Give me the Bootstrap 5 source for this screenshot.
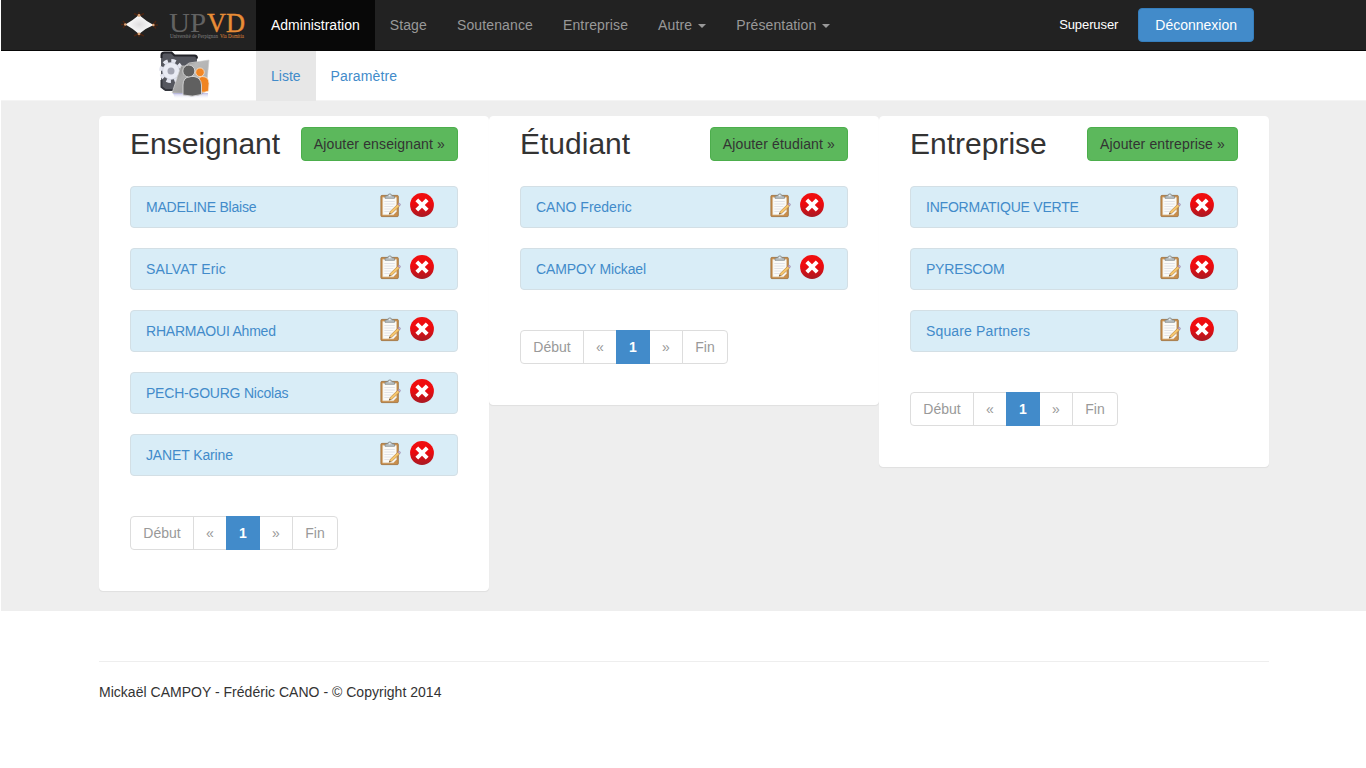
<!DOCTYPE html>
<html lang="fr">
<head>
<meta charset="utf-8">
<meta name="viewport" content="width=device-width, initial-scale=1">
<title>Administration - UPVD</title>
<link href="https://cdn.jsdelivr.net/npm/bootstrap@5.3.0/dist/css/bootstrap.min.css" rel="stylesheet">
<style>
body { font: 14px/20px "Liberation Sans", Arial, sans-serif; color: #333; background: #fff; border-left: 1px solid #fff; overflow-x: hidden; }
a { color: #428bca; text-decoration: none; }
.page-width { width: 1170px; margin-left: 98px; }
.topbar { height: 51px; background: #222; border-bottom: 1px solid #080808; }
.logo-box { width: 157px; height: 50px; }
.logo-box svg { display: block; }
.menu-link { display: block; padding: 15px; color: #999; letter-spacing: .13px; }
.menu-link.active { letter-spacing: 0; }
.topbar .menu-link.active { background: #080808; color: #fff; }
.caret { display: inline-block; margin-left: 2px; vertical-align: middle; border-top: 4px solid; border-left: 4px solid transparent; border-right: 4px solid transparent; }
.user-name { color: #fff; font-size: 13px; letter-spacing: -.1px; margin-right: 20px; padding-bottom: 1px; }
.btn { --bs-btn-font-size: 14px; --bs-btn-line-height: 20px; --bs-btn-border-radius: 4px; --bs-btn-padding-y: 6px; --bs-btn-padding-x: 12px; }
.btn-logout { --bs-btn-bg: #428bca; --bs-btn-border-color: #357ebd; --bs-btn-color: #fff; --bs-btn-padding-x: 16px; margin-right: 15px; }
.btn-add { --bs-btn-bg: #5cb85c; --bs-btn-border-color: #4cae4c; --bs-btn-color: #333; letter-spacing: .14px; }
.subbar { height: 50px; background: #fff; border-bottom: 1px solid #f4f4f4; }
.subbar .menu-link { color: #428bca; }
.subbar .menu-link.active { background: #e7e7e7; }
.board { background: #eee; height: 510px; padding-top: 15px; }
.panel-col { width: 390px; padding: 10px 30px 40px; background: #fff; border: 1px solid #fff; border-radius: 4px; box-shadow: 0 1px 1px rgba(0,0,0,.06); }
.panel-col h2 { font-size: 30px; line-height: 33px; font-weight: 400; color: #333; margin: 0; }
.panel-head { height: 34px; margin-bottom: 25px; }
.entry { height: 42px; margin-bottom: 20px; padding: 0 23px 0 15px; background: #d9edf7; border: 1px solid #d3dfe5; border-radius: 4px; }
.entry .snug { letter-spacing: -.22px; }
.entry .near { letter-spacing: -.13px; }
.entry .wide { letter-spacing: .15px; }
.entry-icons { margin-top: -3px; gap: 9px; }
.entry-icons svg { display: block; }
.pagination { --bs-pagination-font-size: 14px; --bs-pagination-padding-x: 0; --bs-pagination-padding-y: 6px; --bs-pagination-color: #999; --bs-pagination-border-color: #ddd; --bs-pagination-border-radius: 4px; --bs-pagination-active-bg: #428bca; --bs-pagination-active-border-color: #428bca; margin: 40px 0 0; }
.page-link { width: 34px; text-align: center; }
.page-item:first-child .page-link { width: 64px; }
.page-item:last-child .page-link { width: 46px; }
.page-item.active .page-link { font-weight: 700; }
.foot { margin-top: 50px; border-top: 1px solid #eee; padding-top: 20px; letter-spacing: .02px; }
</style>
</head>
<body>
<svg class="position-absolute" width="0" height="0" aria-hidden="true">
  <defs>
    <linearGradient id="redShade" x2="0" y2="1"><stop stop-color="#f01010"/><stop offset=".45" stop-color="#ee0a0e"/><stop offset="1" stop-color="#a81a24"/></linearGradient>
    <symbol id="edit" viewBox="0 0 21 25">
      <rect x=".9" y="2.4" width="17.4" height="21.2" rx="1" fill="#c98f4c" stroke="#9c6a34" stroke-width=".8"/>
      <path d="M2.8 4.4h13.6v14.2l-3 3.2H2.8z" fill="#fbfbf8" stroke="#e2dccf" stroke-width=".5"/>
      <path d="M4.3 8.5h10.5M4.3 11h10.5M4.3 13.5h9M4.3 16h7M4.3 18.5h5" stroke="#dcdde2" stroke-width=".8"/>
      <path d="M5 5.3V3.2l2.5-.4C8 .3 11.6.3 12 2.8l2.5.4v2.1z" fill="#bcc3c6" stroke="#7b8383" stroke-width=".7"/>
      <circle cx="9.8" cy="2.6" r=".8" fill="#edf5f6"/>
      <path d="M9.2 21.3l1.1-3 7.6-7.2 1.8 1.9-7.6 7.1z" fill="#f6c66a" stroke="#ad7c48" stroke-width=".6"/>
      <path d="M17.9 11.1l.8-.8q1.1-.3 1.9 1l-.9 1.7z" fill="#cfaed0" stroke="#8980a2" stroke-width=".5"/>
      <path d="M9.2 21.3l.5-1.5 1.1.9z" fill="#4d4637"/>
    </symbol>
    <symbol id="remove" viewBox="0 0 24 24">
      <circle cx="12" cy="12" r="11.9" fill="url(#redShade)"/>
      <path d="M8.2 5.4l3.8 3.8 3.8-3.8 2.8 2.8-3.8 3.8 3.8 3.8-2.8 2.8-3.8-3.8-3.8 3.8-2.8-2.8L9.2 12 5.4 8.2z" fill="#fff"/>
    </symbol>
  </defs>
</svg>

<header class="topbar">
  <div class="page-width d-flex align-items-center">
    <a class="logo-box" href="#" aria-label="UPVD">
      <svg width="157" height="50" viewBox="99 0 157 50">
        <defs><radialGradient id="pearl"><stop stop-color="#dedcde"/><stop offset="1" stop-color="#fff"/></radialGradient></defs>
        <g stroke="#4a2411" stroke-width="1.4" fill="none">
          <path d="M134 13.5l5 2.5 5-2.5M139 12v4M134 36l5-2.5 5 2.5M139 34v3M123 21l3 3.5-3 3.5M121 24.5h5M156 21l-3 4 3 3.500M153 25h5"/>
        </g>
        <path d="M139 15Q146 21 153.500 25Q146 28 139 34Q132 28 125.500 24.500Q132 21 139 15z" fill="url(#pearl)"/>
        <g fill="#d8a67c"><circle cx="139" cy="15.5" r="1.4"/><circle cx="139" cy="33.8" r="1.4"/><circle cx="125.3" cy="24.5" r="1.3"/><circle cx="153.3" cy="25" r="1.3"/></g>
        <g font-family="Liberation Serif, serif" font-size="27">
          <text x="169" y="31.500" fill="#626262" textLength="37" lengthAdjust="spacingAndGlyphs">UP</text>
          <text x="207" y="31.500" fill="#e88d36" stroke="#e88d36" stroke-width=".4" textLength="38" lengthAdjust="spacingAndGlyphs">VD</text>
        </g>
        <g font-family="Liberation Serif, serif" font-size="5.5">
          <text x="170" y="37.500" fill="#858585" textLength="48" lengthAdjust="spacingAndGlyphs">Université de Perpignan</text>
          <text x="220" y="37.500" fill="#e08b3c" textLength="24" lengthAdjust="spacingAndGlyphs">Via Domitia</text>
        </g>
      </svg>
    </a>
    <nav class="d-flex">
      <a class="menu-link active" href="#">Administration</a>
      <a class="menu-link" href="#">Stage</a>
      <a class="menu-link" href="#">Soutenance</a>
      <a class="menu-link" href="#">Entreprise</a>
      <a class="menu-link" href="#">Autre <span class="caret"></span></a>
      <a class="menu-link" href="#">Présentation <span class="caret"></span></a>
    </nav>
    <span class="user-name ms-auto">Superuser</span>
    <a class="btn btn-logout" href="#">Déconnexion</a>
  </div>
</header>

<div class="subbar">
  <div class="page-width d-flex">
    <div class="logo-box">
      <svg width="157" height="49" viewBox="99 51 157 49">
        <defs>
          <linearGradient id="folder" x2="1" y2="1"><stop stop-color="#777"/><stop offset=".4" stop-color="#aaa"/><stop offset="1" stop-color="#8a8a8a"/></linearGradient>
          <linearGradient id="glow" x2="0" y2="1"><stop stop-color="#8c8cd0" stop-opacity=".6"/><stop offset="1" stop-color="#fff" stop-opacity="0"/></linearGradient>
        </defs>
        <path d="M161 55q0-3 3-3h7l3 3h20q3 0 3 3v30l-33 2-3-4z" fill="#55575f"/>
        <path d="M161.500 58v-3q0-2.500 3-2.500h7l3 3h20q2.500 0 2.500 3" fill="none" stroke="#222329" stroke-width="2"/>
        <path d="M161.500 80v7l4 3h9" fill="none" stroke="#33353c" stroke-width="2"/>
        <circle cx="171" cy="71" r="9.500" fill="none" stroke="#e4e6f0" stroke-width="5" stroke-dasharray="4.200 3.260"/>
        <circle cx="171" cy="71" r="8.500" fill="#e9ebf4" stroke="#c4c7d5" stroke-width=".6"/>
        <circle cx="171" cy="71" r="3.500" fill="#a3a5b2"/>
        <path d="M181 66h4l4-3 20-3-3 31-4 3-30-1z" fill="url(#folder)" stroke="#d4d4d4" stroke-width=".7"/>
        <path d="M190 64l19-4-3 31-10 2z" fill="#ccc" opacity=".45"/>
        <path d="M173 93h35v6h-33z" fill="url(#glow)"/>
        <path d="M199 92V83q-1-6 3-6.500 7 0 7 7l-.5 7.500q-4 2-9.500 1z" fill="#f08420" stroke="#fae3ca" stroke-width=".8"/>
        <circle cx="200" cy="72.300" r="4.300" fill="#f38724" stroke="#fae3ca" stroke-width=".8"/>
        <path d="M183 95V85q0-7.500 7-8.500h4q7 1 7.500 8.500v9.500q-9 3-18.500.5z" fill="#606060" stroke="#d8d8d8" stroke-width=".9"/>
        <circle cx="188.800" cy="71" r="6" fill="#606060" stroke="#d8d8d8" stroke-width=".9"/>
      </svg>
    </div>
    <nav class="d-flex">
      <a class="menu-link active" href="#">Liste</a>
      <a class="menu-link" href="#">Paramètre</a>
    </nav>
  </div>
</div>

<main class="board">
  <div class="page-width d-flex align-items-start">
    <section class="panel-col">
      <div class="panel-head d-flex justify-content-between"><h2>Enseignant</h2><a class="btn btn-add" href="#">Ajouter enseignant »</a></div>
      <div class="entry d-flex align-items-center justify-content-between"><a class="snug" href="#">MADELINE Blaise</a><span class="entry-icons d-flex"><svg width="21" height="25"><use href="#edit"/></svg><svg width="24" height="24"><use href="#remove"/></svg></span></div>
      <div class="entry d-flex align-items-center justify-content-between"><a class="wide" href="#">SALVAT Eric</a><span class="entry-icons d-flex"><svg width="21" height="25"><use href="#edit"/></svg><svg width="24" height="24"><use href="#remove"/></svg></span></div>
      <div class="entry d-flex align-items-center justify-content-between"><a class="snug" href="#">RHARMAOUI Ahmed</a><span class="entry-icons d-flex"><svg width="21" height="25"><use href="#edit"/></svg><svg width="24" height="24"><use href="#remove"/></svg></span></div>
      <div class="entry d-flex align-items-center justify-content-between"><a class="snug" href="#">PECH-GOURG Nicolas</a><span class="entry-icons d-flex"><svg width="21" height="25"><use href="#edit"/></svg><svg width="24" height="24"><use href="#remove"/></svg></span></div>
      <div class="entry d-flex align-items-center justify-content-between"><a class="near" href="#">JANET Karine</a><span class="entry-icons d-flex"><svg width="21" height="25"><use href="#edit"/></svg><svg width="24" height="24"><use href="#remove"/></svg></span></div>
      <ul class="pagination"><li class="page-item"><a class="page-link" href="#">Début</a></li><li class="page-item"><a class="page-link" href="#">«</a></li><li class="page-item active"><a class="page-link" href="#">1</a></li><li class="page-item"><a class="page-link" href="#">»</a></li><li class="page-item"><a class="page-link" href="#">Fin</a></li></ul>
    </section>
    <section class="panel-col">
      <div class="panel-head d-flex justify-content-between"><h2>Étudiant</h2><a class="btn btn-add" href="#">Ajouter étudiant »</a></div>
      <div class="entry d-flex align-items-center justify-content-between"><a href="#">CANO Frederic</a><span class="entry-icons d-flex"><svg width="21" height="25"><use href="#edit"/></svg><svg width="24" height="24"><use href="#remove"/></svg></span></div>
      <div class="entry d-flex align-items-center justify-content-between"><a class="near" href="#">CAMPOY Mickael</a><span class="entry-icons d-flex"><svg width="21" height="25"><use href="#edit"/></svg><svg width="24" height="24"><use href="#remove"/></svg></span></div>
      <ul class="pagination"><li class="page-item"><a class="page-link" href="#">Début</a></li><li class="page-item"><a class="page-link" href="#">«</a></li><li class="page-item active"><a class="page-link" href="#">1</a></li><li class="page-item"><a class="page-link" href="#">»</a></li><li class="page-item"><a class="page-link" href="#">Fin</a></li></ul>
    </section>
    <section class="panel-col">
      <div class="panel-head d-flex justify-content-between"><h2>Entreprise</h2><a class="btn btn-add" href="#">Ajouter entreprise »</a></div>
      <div class="entry d-flex align-items-center justify-content-between"><a class="snug" href="#">INFORMATIQUE VERTE</a><span class="entry-icons d-flex"><svg width="21" height="25"><use href="#edit"/></svg><svg width="24" height="24"><use href="#remove"/></svg></span></div>
      <div class="entry d-flex align-items-center justify-content-between"><a class="snug" href="#">PYRESCOM</a><span class="entry-icons d-flex"><svg width="21" height="25"><use href="#edit"/></svg><svg width="24" height="24"><use href="#remove"/></svg></span></div>
      <div class="entry d-flex align-items-center justify-content-between"><a class="wide" href="#">Square Partners</a><span class="entry-icons d-flex"><svg width="21" height="25"><use href="#edit"/></svg><svg width="24" height="24"><use href="#remove"/></svg></span></div>
      <ul class="pagination"><li class="page-item"><a class="page-link" href="#">Début</a></li><li class="page-item"><a class="page-link" href="#">«</a></li><li class="page-item active"><a class="page-link" href="#">1</a></li><li class="page-item"><a class="page-link" href="#">»</a></li><li class="page-item"><a class="page-link" href="#">Fin</a></li></ul>
    </section>
  </div>
</main>

<footer class="page-width foot">Mickaël CAMPOY - Frédéric CANO - © Copyright 2014</footer>
<script src="https://cdn.jsdelivr.net/npm/bootstrap@5.3.0/dist/js/bootstrap.bundle.min.js"></script>
</body>
</html>
